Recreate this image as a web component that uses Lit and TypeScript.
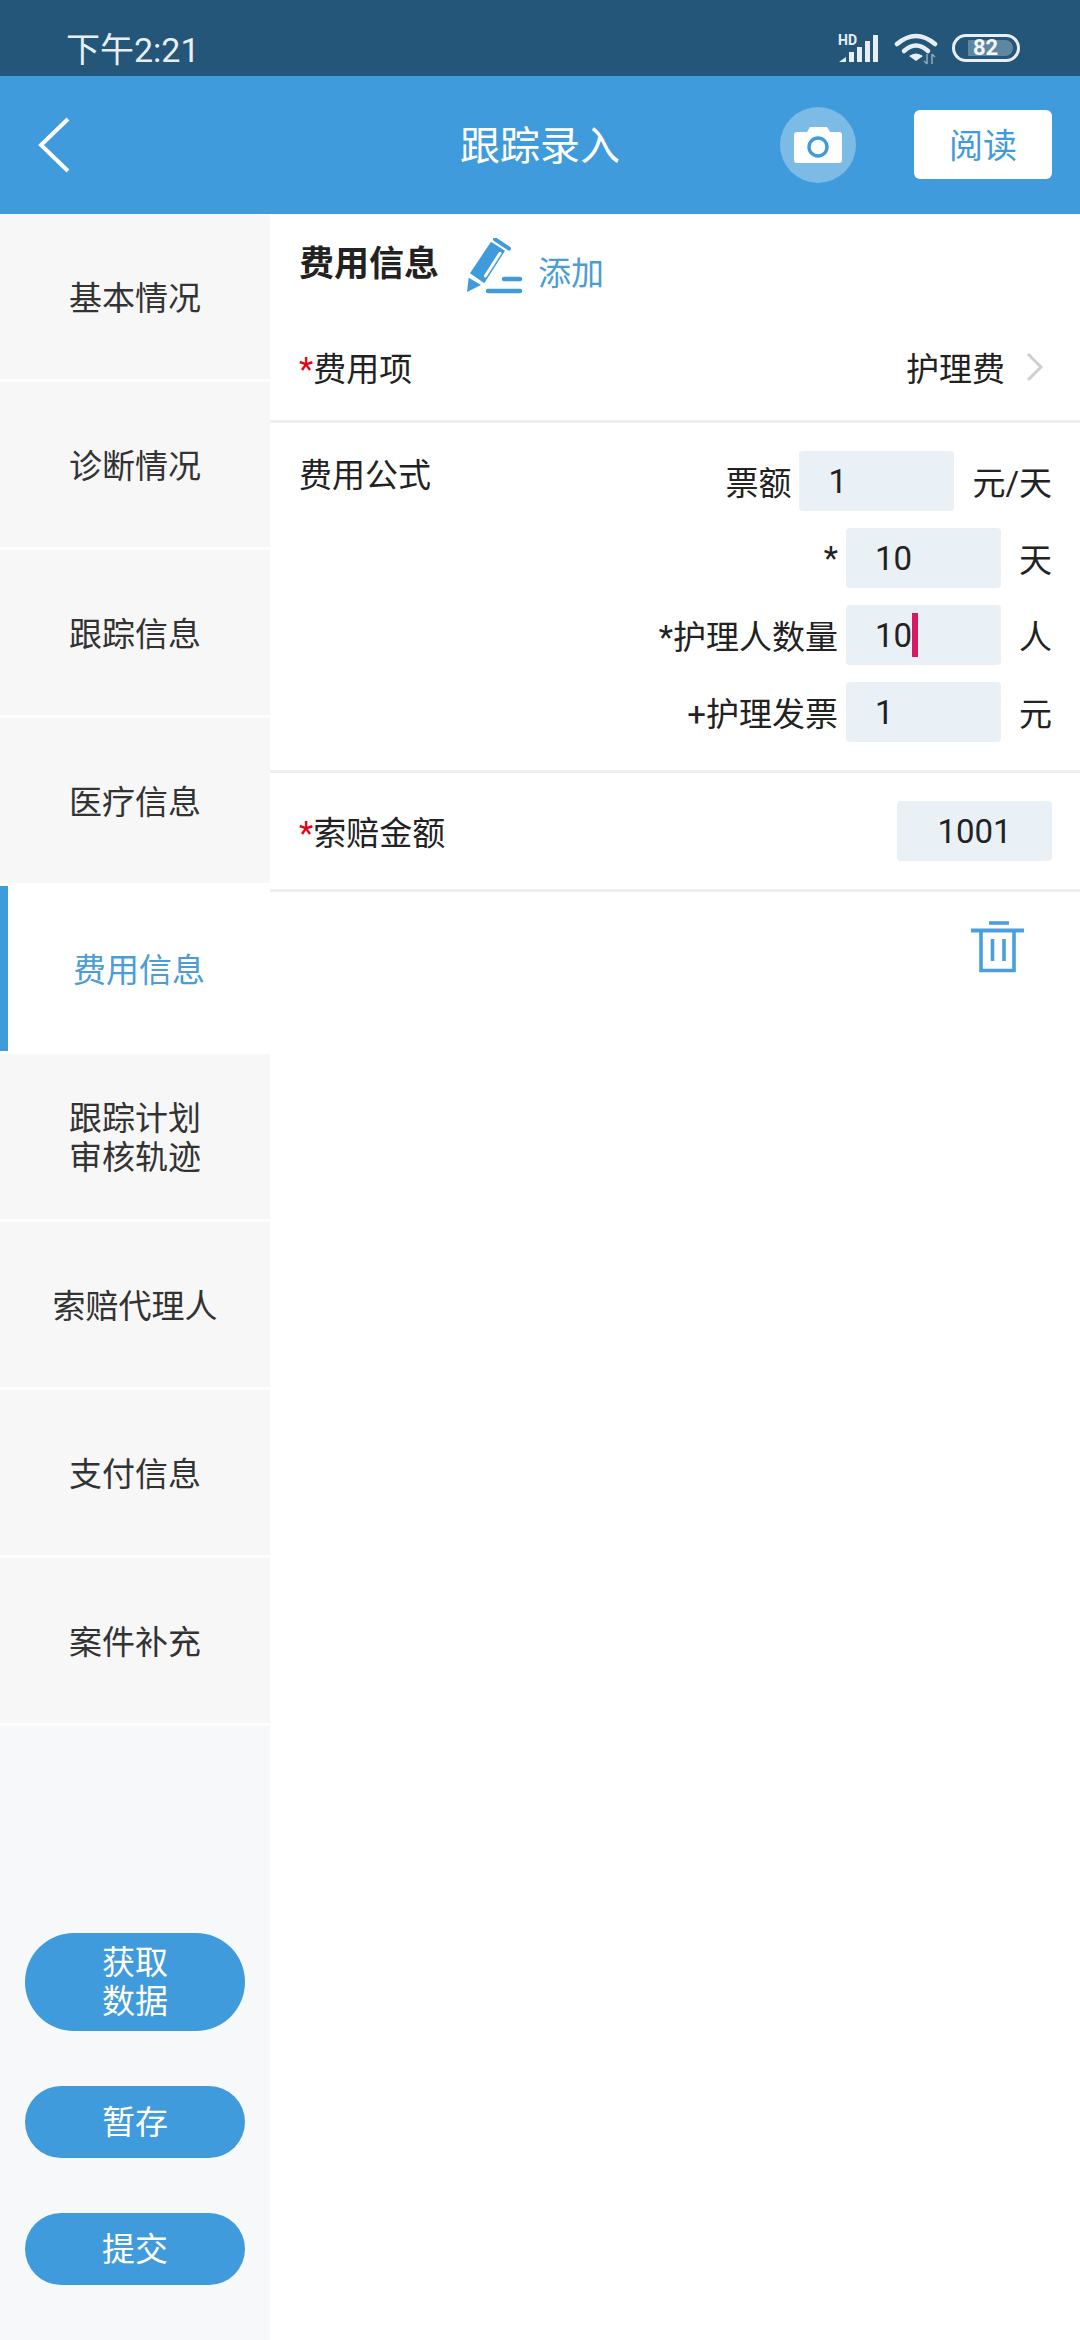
import { LitElement, css, html } from "lit";
import { customElement } from "lit/decorators.js";

interface FormulaLine {
  label: string;
  value: string;
  unit: string;
  focused?: boolean;
}

const MENU: string[][] = [
  ["基本情况"],
  ["诊断情况"],
  ["跟踪信息"],
  ["医疗信息"],
  ["费用信息"],
  ["跟踪计划", "审核轨迹"],
  ["索赔代理人"],
  ["支付信息"],
  ["案件补充"],
];

const ACTIVE_MENU = 4;

const FORMULA: FormulaLine[] = [
  { label: "票额", value: "1", unit: "元/天" },
  { label: "*", value: "10", unit: "天" },
  { label: "*护理人数量", value: "10", unit: "人", focused: true },
  { label: "+护理发票", value: "1", unit: "元" },
];

@customElement("app-root")
export class AppRoot extends LitElement {
  static styles = css`
    :host {
      display: flex;
      flex-direction: column;
      width: 1080px;
      height: 2340px;
      overflow: hidden;
      background: #fff;
      color: #222;
      font-family: Roboto, "Noto Sans CJK SC", sans-serif;
      font-size: 33px;
    }

    .status {
      flex: none;
      box-sizing: border-box;
      height: 76px;
      background: #235678;
      color: #e8eff4;
      display: flex;
      align-items: center;
      padding: 24px 60px 0 66px;
    }
    .status .time {
      flex: 1;
      font-size: 34px;
      line-height: 48px;
    }
    .status svg {
      display: block;
    }
    .signal {
      margin: -3px 14px 0 0;
    }
    .wifi {
      margin: -3px 14px 0 0;
    }
    .battery {
      box-sizing: border-box;
      width: 68px;
      height: 28px;
      border: 3px solid #e8eff4;
      border-radius: 14px;
      padding: 3px 4px 3px 13px;
      margin-top: -4px;
    }
    .battery .level {
      height: 16px;
      background: #5f87a2;
      border-radius: 0 8px 8px 0;
      font-size: 22px;
      font-weight: 700;
      line-height: 16px;
      padding-left: 5px;
      color: #f2f6f9;
    }

    .header {
      flex: none;
      height: 138px;
      background: #3f9bdb;
      display: grid;
      grid-template-columns: 1fr auto 1fr;
      align-items: center;
      color: #fff;
    }
    .back {
      display: block;
      margin-left: 36px;
    }
    .header h1 {
      margin: 0;
      padding-top: 3px;
      font-size: 40px;
      font-weight: 400;
      line-height: 56px;
    }
    .actions {
      display: flex;
      align-items: center;
      justify-content: flex-end;
      gap: 58px;
      padding-right: 28px;
    }
    .camera {
      width: 76px;
      height: 76px;
      border-radius: 50%;
      background: #7dbbe7;
      display: flex;
      align-items: center;
      justify-content: center;
    }
    .read {
      box-sizing: border-box;
      width: 138px;
      height: 69px;
      margin-top: -1px;
      padding-bottom: 2px;
      border-radius: 6px;
      background: #fff;
      color: #3f9bdb;
      font-size: 34px;
      display: flex;
      align-items: center;
      justify-content: center;
    }

    .body {
      flex: 1;
      display: flex;
      min-height: 0;
    }

    .side {
      flex: none;
      width: 270px;
      background: #f7f8f9;
      display: flex;
      flex-direction: column;
    }
    .menu {
      background: #fff;
    }
    .menu-item {
      box-sizing: border-box;
      height: 165px;
      margin-bottom: 3px;
      padding-top: 3px;
      background: #f7f7f7;
      display: flex;
      flex-direction: column;
      align-items: center;
      justify-content: center;
      line-height: 39px;
      color: #333;
    }
    .menu-item.active {
      background: #fff;
      border-left: 8px solid #3f9bdb;
      color: #4a9dd6;
    }
    .buttons {
      margin-top: auto;
      display: flex;
      flex-direction: column;
      gap: 55px;
      padding: 0 25px 55px;
    }
    .pill {
      min-height: 72px;
      border-radius: 50px;
      background: #3f9bdb;
      color: #fff;
      display: flex;
      flex-direction: column;
      align-items: center;
      justify-content: center;
      line-height: 39px;
      padding: 10px 0;
      box-sizing: border-box;
    }

    .main {
      flex: 1;
      min-width: 0;
    }
    .title-row {
      height: 106px;
      box-sizing: border-box;
      padding: 27px 0 0 29px;
      display: flex;
      align-items: flex-start;
    }
    .title-row h2 {
      margin: 0;
      font-size: 35px;
      font-weight: 700;
      line-height: 48px;
    }
    .pencil {
      display: block;
      margin: -3px 0 0 26px;
    }
    .add {
      color: #4a9dd6;
      line-height: 46px;
      margin: 10px 0 0 13px;
    }
    .row {
      display: flex;
      justify-content: space-between;
      border-bottom: 3px solid #eeeeee;
      padding: 0 28px 0 29px;
    }
    .req {
      color: #e60012;
    }
    .item-row {
      height: 103px;
      box-sizing: border-box;
      align-items: center;
      padding-bottom: 6px;
    }
    .picker {
      display: flex;
      align-items: center;
      gap: 21px;
      padding-right: 9px;
    }
    .formula-row {
      padding-top: 28px;
      padding-bottom: 28px;
    }
    .formula-label {
      line-height: 46px;
      padding-top: 2px;
    }
    .formula {
      display: flex;
      flex-direction: column;
      gap: 17px;
    }
    .line {
      display: flex;
      align-items: center;
      justify-content: flex-end;
    }
    .line .label {
      margin-right: 8px;
    }
    .line .unit {
      margin-left: 18px;
    }
    .input {
      box-sizing: border-box;
      width: 155px;
      height: 60px;
      background: #e9f0f6;
      border-radius: 4px;
      padding: 2px 0 0 29px;
      display: flex;
      align-items: center;
      line-height: 44px;
    }
    .caret {
      width: 6px;
      height: 44px;
      margin-top: -2px;
      background: #d81b60;
      flex: none;
    }
    .amount-row {
      height: 119px;
      box-sizing: border-box;
      align-items: center;
      padding-bottom: 1px;
    }
    .amount-row .input {
      padding-left: 0;
      justify-content: center;
    }
    .trash-row {
      display: flex;
      justify-content: flex-end;
      padding: 29px 55px 0 0;
    }
  `;

  private statusIcons() {
    return html`
      <svg class="signal" width="42" height="32" viewBox="0 0 42 32">
        <text x="0" y="12" font-family="Roboto" font-size="14" font-weight="700" fill="#e8eff4">HD</text>
        <path d="M1 29 L8 24 V29 Z" fill="#e8eff4" />
        <rect x="11" y="19" width="5" height="10" fill="#e8eff4" />
        <rect x="19" y="14" width="5" height="15" fill="#e8eff4" />
        <rect x="27" y="8" width="5" height="21" fill="#e8eff4" />
        <rect x="35" y="2" width="5" height="27" fill="#e8eff4" />
      </svg>
      <svg class="wifi" width="44" height="34" viewBox="0 0 44 34">
        <path d="M3 12 Q22 -4 41 12" fill="none" stroke="#e8eff4" stroke-width="4.5" stroke-linecap="round" />
        <path d="M10 19 Q22 8 34 19" fill="none" stroke="#e8eff4" stroke-width="4.5" stroke-linecap="round" />
        <path d="M22 29 L15 24 Q22 19 29 24 Z" fill="#e8eff4" />
        <path d="M33 22 V32 M33 32 L30 29 M38 22 V32 M38 22 L41 25" fill="none" stroke="#8aa8bc" stroke-width="1.6" />
      </svg>
      <div class="battery"><div class="level">82</div></div>
    `;
  }

  private pencilIcon() {
    return html`
      <svg class="pencil" width="60" height="58" viewBox="0 0 60 58" fill="#3f9bdb">
        <path d="M2 54 L3.7 39.7 L16 47 Z" />
        <path d="M5 35.3 L26 3.7 L40 12.7 L19.3 45.3 Z" />
        <path d="M20.3 38 L35 15.3" fill="none" stroke="#fff" stroke-width="3" stroke-linecap="round" />
        <path d="M30 1.3 L44 10.6" fill="none" stroke="#3f9bdb" stroke-width="4" stroke-linecap="round" />
        <path d="M39 41 H55 M23 53 H55" fill="none" stroke="#3f9bdb" stroke-width="4.5" stroke-linecap="round" />
      </svg>
    `;
  }

  private trashIcon() {
    return html`
      <svg width="54" height="52" viewBox="0 0 54 52" fill="none" stroke="#4a9fdc" stroke-width="3.6">
        <path d="M18 2 H38" />
        <path d="M0 9.5 H53" stroke-width="4" />
        <path d="M10 9.5 V49.5 H43 V9.5" />
        <path d="M21.5 18 V40 M33 18 V40" />
      </svg>
    `;
  }

  render() {
    return html`
      <div class="status">
        <span class="time">下午2:21</span>
        ${this.statusIcons()}
      </div>

      <div class="header">
        <svg class="back" width="34" height="56" viewBox="0 0 34 56">
          <path d="M32 2 L5 28 L32 54" fill="none" stroke="#fff" stroke-width="4" />
        </svg>
        <h1>跟踪录入</h1>
        <div class="actions">
          <div class="camera">
            <svg width="48" height="38" viewBox="0 0 48 38">
              <path d="M3 6 H13 L16 1 H33 L36 6 H45 Q48 6 48 9 V34 Q48 37 45 37 H3 Q0 37 0 34 V9 Q0 6 3 6 Z" fill="#fff" />
              <circle cx="24" cy="21" r="9" fill="none" stroke="#3f9bdb" stroke-width="3.4" />
            </svg>
          </div>
          <div class="read">阅读</div>
        </div>
      </div>

      <div class="body">
        <nav class="side">
          <div class="menu">
            ${MENU.map(
              (lines, i) => html`
                <div class="menu-item ${i === ACTIVE_MENU ? "active" : ""}">
                  ${lines.map((l) => html`<span>${l}</span>`)}
                </div>
              `
            )}
          </div>
          <div class="buttons">
            <div class="pill"><span>获取</span><span>数据</span></div>
            <div class="pill">暂存</div>
            <div class="pill">提交</div>
          </div>
        </nav>

        <section class="main">
          <div class="title-row">
            <h2>费用信息</h2>
            ${this.pencilIcon()}
            <span class="add">添加</span>
          </div>

          <div class="row item-row">
            <span><span class="req">*</span>费用项</span>
            <span class="picker">
              护理费
              <svg width="17" height="28" viewBox="0 0 17 28">
                <path d="M2 1 L15 14 L2 27" fill="none" stroke="#cfcfcf" stroke-width="3" />
              </svg>
            </span>
          </div>

          <div class="row formula-row">
            <span class="formula-label">费用公式</span>
            <div class="formula">
              ${FORMULA.map(
                (f) => html`
                  <div class="line">
                    <span class="label">${f.label}</span>
                    <div class="input">
                      ${f.value}${f.focused ? html`<span class="caret"></span>` : ""}
                    </div>
                    <span class="unit">${f.unit}</span>
                  </div>
                `
              )}
            </div>
          </div>

          <div class="row amount-row">
            <span><span class="req">*</span>索赔金额</span>
            <div class="input">1001</div>
          </div>

          <div class="trash-row">${this.trashIcon()}</div>
        </section>
      </div>
    `;
  }
}
